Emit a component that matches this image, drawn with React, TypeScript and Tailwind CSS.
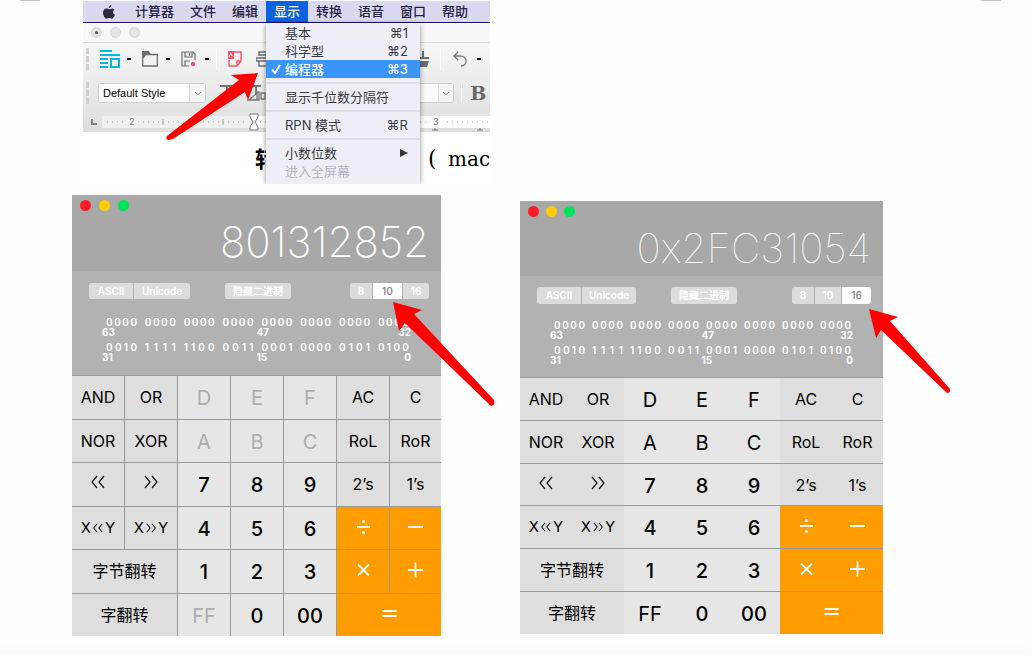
import type { ReactNode } from "react";

type CalcProps = {
  label: string;
  value: string;
  base: "8" | "10" | "16";
  hex: boolean;
  divided: boolean;
  roomy: boolean;
};

const HIGH_BITS = ["0000", "0000", "0000", "0000", "0000", "0000", "0000", "0000"];
const LOW_BITS = ["0010", "1111", "1100", "0011", "0001", "0000", "0101", "0100"];

type Key = { text: string; kind: "op" | "num" | "hex" | "orange"; wide?: boolean };

const KEYS: Key[] = [
  { text: "AND", kind: "op" }, { text: "OR", kind: "op" }, { text: "D", kind: "hex" }, { text: "E", kind: "hex" }, { text: "F", kind: "hex" }, { text: "AC", kind: "op" }, { text: "C", kind: "op" },
  { text: "NOR", kind: "op" }, { text: "XOR", kind: "op" }, { text: "A", kind: "hex" }, { text: "B", kind: "hex" }, { text: "C", kind: "hex" }, { text: "RoL", kind: "op" }, { text: "RoR", kind: "op" },
  { text: "<<", kind: "op" }, { text: ">>", kind: "op" }, { text: "7", kind: "num" }, { text: "8", kind: "num" }, { text: "9", kind: "num" }, { text: "2’s", kind: "op" }, { text: "1’s", kind: "op" },
  { text: "X<<Y", kind: "op" }, { text: "X>>Y", kind: "op" }, { text: "4", kind: "num" }, { text: "5", kind: "num" }, { text: "6", kind: "num" }, { text: "÷", kind: "orange" }, { text: "−", kind: "orange" },
  { text: "字节翻转", kind: "op", wide: true }, { text: "1", kind: "num" }, { text: "2", kind: "num" }, { text: "3", kind: "num" }, { text: "×", kind: "orange" }, { text: "+", kind: "orange" },
  { text: "字翻转", kind: "op", wide: true }, { text: "FF", kind: "hex" }, { text: "0", kind: "num" }, { text: "00", kind: "num" }, { text: "=", kind: "orange", wide: true },
];

function Chevrons({ right }: { right?: boolean }) {
  return (
    <svg viewBox="0 0 14 14" className="mb-1 h-3.5 w-3.5 shrink-0" fill="none" stroke="#111" strokeWidth="1.2" aria-hidden="true">
      <path d={right ? "M1 1l5 6-5 6M8 1l5 6-5 6" : "M6 1L1 7l5 6M13 1L8 7l5 6"} />
    </svg>
  );
}

function OperatorGlyph({ name }: { name: string }) {
  const shapes: Record<string, ReactNode> = {
    "÷": <><path d="M2 9h13" /><circle cx="8.5" cy="3.5" r="1.6" fill="#fff" stroke="none" /><circle cx="8.5" cy="14.5" r="1.6" fill="#fff" stroke="none" /></>,
    "−": <path d="M1 9h15" />,
    "×": <path d="M3 3.5l11 11M14 3.5l-11 11" />,
    "+": <path d="M1 9h15M8.5 1.5v15" />,
    "=": <path d="M1.500 6h14M1.500 11h14" />,
  };
  return (
    <svg viewBox="0 0 17 18" className="mb-0.5 h-[18px] w-[17px]" fill="none" stroke="#fff" strokeWidth="1.8" aria-hidden="true">
      {shapes[name]}
    </svg>
  );
}

function KeyFace({ text, kind }: Key) {
  if (kind === "orange") return <OperatorGlyph name={text} />;
  if (text === "<<") return <Chevrons />;
  if (text === ">>") return <Chevrons right />;
  if (text === "X<<Y" || text === "X>>Y") {
    return (
      <>
        <span>X</span>
        <svg viewBox="0 0 14 14" className="mx-px h-3 w-3" fill="none" stroke="#111" strokeWidth="1.2" aria-hidden="true">
          <path d={text === "X>>Y" ? "M2 2l4 5-4 5M8 2l4 5-4 5" : "M6 2L2 7l4 5M12 2L8 7l4 5"} />
        </svg>
        <span>Y</span>
      </>
    );
  }
  return <span>{text}</span>;
}

function BitRow({ groups }: { groups: string[] }) {
  return (
    <div className="flex justify-between pl-1 pr-0.5 leading-3">
      {groups.map((g, i) => (
        <div key={i} className="flex w-[31px] justify-between font-semibold">
          {g.split("").map((b, j) => <span key={j}>{b}</span>)}
        </div>
      ))}
    </div>
  );
}

function BitLabels({ left, middle, right }: { left: string; middle: string; right: string }) {
  return (
    <div className="grid grid-cols-2 font-bold leading-[9px]">
      <span>{left}</span>
      <span className="flex justify-between"><span>{middle}</span><span>{right}</span></span>
    </div>
  );
}

function Calculator({ label, value, base, hex, divided, roomy }: CalcProps) {
  return (
    <section aria-label={label} className="bg-[#b2b2b2] text-white">
      <header className={`bg-[#a8a8a8] ${roomy ? "h-[76px]" : "h-[75px]"}`}>
        <div className={`flex pl-2 pt-[5px] ${roomy ? "gap-2" : "gap-[7px]"}`}>
          <button aria-label="关闭" className="h-[11px] w-[11px] rounded-full bg-[#ff1c24]" />
          <button aria-label="最小化" className="h-[11px] w-[11px] rounded-full bg-[#ffcc00]" />
          <button aria-label="缩放" className="h-[11px] w-[11px] rounded-full bg-[#00e45c]" />
        </div>
        <output className={`block pr-3 pt-2 text-right leading-[46px] ${roomy ? "text-[42px] font-extralight" : "text-[41px] font-thin"}`}>{value}</output>
      </header>

      <div className={`text-[10px] ${roomy ? "h-[104px]" : "h-[101px]"}`}>
        <div className={`flex pl-[17px] pr-3 font-semibold ${roomy ? "pt-3 leading-4" : "pt-[11px] leading-[17px]"}`}>
          <div className="flex gap-px overflow-hidden rounded-[3px]">
            <button className="w-11 bg-[#dcdcdc]">ASCII</button>
            <button className={`bg-[#dcdcdc] ${roomy ? "w-14" : "w-[54px]"}`}>Unicode</button>
          </div>
          <button className="ml-[35px] w-[66px] rounded-[3px] bg-[#dcdcdc] font-bold">隐藏二进制</button>
          <div className="ml-auto flex gap-px overflow-hidden rounded-[3px]">
            {(["8", "10", "16"] as const).map((b) => (
              <button
                key={b}
                aria-pressed={b === base}
                className={`${b === "8" ? "w-[22px]" : b === base ? "w-[29px]" : "w-[26px]"} ${b === base ? "bg-white text-[#8c8c8c]" : "bg-[#dcdcdc] text-white"}`}
              >
                {b}
              </button>
            ))}
          </div>
        </div>
        <div className={`px-[30px] ${roomy ? "pt-[17px]" : "pt-[15px]"}`}>
          <BitRow groups={HIGH_BITS} />
          <BitLabels left="63" middle="47" right="32" />
          <div className="h-1" />
          <BitRow groups={LOW_BITS} />
          <BitLabels left="31" middle="15" right="0" />
        </div>
      </div>

      <div
        className={`grid auto-rows-fr grid-cols-[repeat(6,52fr)_51fr] border-t border-[#9a9a9a] bg-[#9a9a9a] ${
          divided ? "gap-px" : "gap-y-px"
        } ${roomy ? "min-h-[261px]" : "min-h-[257px]"}`}
      >
        {KEYS.map((k, i) => {
          const tone =
            k.kind === "orange" ? "bg-[#ff9c00]" : k.kind === "op" ? "bg-[#dedede] text-black" : k.kind === "hex" && !hex ? "bg-[#e6e6e6] text-[#adadad]" : "bg-[#e6e6e6] text-black";
          const size = k.kind === "op" ? (k.text.includes("Y") ? "text-[15px]" : "text-base") : k.kind === "hex" ? "text-xl" : "text-xl font-medium";
          return (
            <button
              key={i}
              aria-label={k.text}
              disabled={k.kind === "hex" && !hex}
              className={`flex items-center justify-center ${k.wide ? "col-span-2" : ""} ${tone} ${size} ${k.kind === "num" || k.kind === "hex" ? "pt-0.5" : ""}`}
            >
              <KeyFace {...k} />
            </button>
          );
        })}
      </div>
    </section>
  );
}

function Dash() {
  return <span className="h-0.5 w-1 shrink-0 bg-black" />;
}

function Grip() {
  return <span className="h-[22px] w-[3px] shrink-0 border-l-[3px] border-dashed border-[#cfcfcf]" />;
}

function MenuItem({ text, shortcut, active, muted, submenu }: { text: string; shortcut?: string; active?: boolean; muted?: boolean; submenu?: boolean }) {
  return (
    <button
      role="menuitem"
      className={`flex h-[18px] w-full items-center pr-3 text-left ${active ? "bg-[#3a94fb] font-medium text-white" : muted ? "text-[#b5b5bf]" : "text-[#3a3a42]"}`}
    >
      <span className="flex w-[19px] items-center justify-center">
        {active && (
          <svg viewBox="0 0 10 10" className="h-2.5 w-2.5" fill="none" stroke="#fff" strokeWidth="2" aria-hidden="true"><path d="M1 5.5l3 3.500L9 1" /></svg>
        )}
      </span>
      <span>{text}</span>
      <span className="ml-auto">{shortcut}</span>
      {submenu && (
        <svg viewBox="0 0 8 10" className="h-2.5 w-2" fill="#33333b" aria-hidden="true"><path d="M0 1l8 4-8 4z" /></svg>
      )}
    </button>
  );
}

function MenuRule() {
  return <div className="my-1 h-0.5 bg-[#dcdce6]" />;
}

const MENUS = ["计算器", "文件", "编辑", "显示", "转换", "语音", "窗口", "帮助"];

function DisplayMenu() {
  return (
    <div role="menu" className="absolute left-[183px] top-[22px] z-10 h-[161px] w-[154px] bg-[#eeeff6] pt-px text-[13px] leading-[18px] shadow-[0_1px_5px_rgba(0,0,0,0.45)]">
      <MenuItem text="基本" shortcut="⌘1" />
      <MenuItem text="科学型" shortcut="⌘2" />
      <MenuItem text="编程器" shortcut="⌘3" active />
      <MenuRule />
      <MenuItem text="显示千位数分隔符" />
      <MenuRule />
      <MenuItem text="RPN 模式" shortcut="⌘R" />
      <MenuRule />
      <MenuItem text="小数位数" submenu />
      <MenuItem text="进入全屏幕" muted />
    </div>
  );
}

function SelectChevron() {
  return (
    <span className="flex w-4 items-center justify-center border-l border-[#dcdcdc] bg-[#f4f4f4]">
      <svg viewBox="0 0 8 5" className="h-[5px] w-2" fill="none" stroke="#888" aria-hidden="true"><path d="M1 1l3 2.500L7 1" /></svg>
    </span>
  );
}

function EditorShot() {
  return (
    <section aria-label="显示菜单" className="relative ml-[83px] h-[183px] w-[39.5%] overflow-hidden bg-white">
      <nav className="flex h-[22px] items-center whitespace-nowrap border-b border-[#1d1065] bg-[#d9d8ef] pl-5 text-[13px] font-medium text-[#25203f]">
        <svg viewBox="0 0 12 14" className="mr-3 h-3.5 w-3 shrink-0" fill="#2d2940" aria-hidden="true">
          <path d="M8.300 0C8.400 1.600 7.200 3 5.800 3 5.700 1.600 7 .2 8.300 0zM11.500 4.700C9.400 6 9.700 8.600 12 9.600 11.300 11.600 10 13.700 8.700 13.700c-1 0-1.300-.6-2.500-.6s-1.600.6-2.500.6C2 13.700 0 10.400 0 7.700 0 5 1.700 3.500 3.400 3.500c1.100 0 2 .7 2.700.7s1.700-.8 3-.8c.8 0 1.800.4 2.400 1.300z" />
        </svg>
        {MENUS.map((m) => (
          <button key={m} className={`h-[21px] px-2 ${m === "显示" ? "bg-[#0a64e0] text-white" : ""}`}>{m}</button>
        ))}
      </nav>

      <div className="flex h-5 items-center gap-2 border-b border-[#d9d9d9] bg-[#f8f8f8] pl-2">
        <span className="flex h-[11px] w-[11px] items-center justify-center rounded-full border border-[#d2d2d2] bg-[#e4e4e4]"><span className="h-[3px] w-[3px] rounded-full bg-[#555]" /></span>
        <span className="h-[11px] w-[11px] rounded-full border border-[#d6d6d6] bg-[#e4e4e4]" />
        <span className="h-[11px] w-[11px] rounded-full border border-[#d6d6d6] bg-[#e4e4e4]" />
      </div>

      <div className="bg-linear-to-b from-[#f6f6f6] to-[#dedede]">
        <div className="flex h-8 items-center pl-[3px]">
          <Grip />
          <svg viewBox="0 0 20 18" className="ml-[11px] mr-[7px] h-[18px] w-5 shrink-0" fill="none" stroke="#09b5e5" strokeWidth="2" aria-hidden="true">
            <path d="M0 1h12M0 5h20M0 9h8M0 13h8M0 17h8M11 9h8v8h-8z" />
          </svg>
          <Dash />
          <svg viewBox="0 0 16 16" className="ml-[11px] mr-2 h-4 w-4 shrink-0" fill="none" stroke="#6e6e6e" strokeWidth="1.3" aria-hidden="true">
            <path d="M.7 15V3.500h14.600V15z" /><path d="M0 0h7l2 4H4L2 7H0z" fill="#6e6e6e" stroke="none" />
          </svg>
          <Dash />
          <svg viewBox="0 0 16 16" className="ml-[11px] mr-2 h-4 w-4 shrink-0" fill="none" stroke="#6e6e6e" strokeWidth="1.2" aria-hidden="true">
            <path d="M8 15H1V1h11l2 2v6M4 1v5h7V1M8.500 2v3M4 15v-5h5" /><circle cx="12" cy="13" r="2.200" fill="#ff4b62" stroke="none" />
          </svg>
          <Dash />
          <span className="ml-[7px] h-[22px] w-px bg-white" />
          <svg viewBox="0 0 14 16" className="ml-[11px] h-4 w-3.5 shrink-0" fill="none" stroke="#fb5468" strokeWidth="1.4" aria-hidden="true">
            <path d="M6 1h7v9l-4 5H1V9M9 15v-5h4" /><path d="M0 0h6v8H0z" fill="#fb5468" stroke="none" /><path d="M1 6l2-4 1 3" stroke="#fff" strokeWidth="1" />
          </svg>
          <svg viewBox="0 0 16 16" className="ml-3.5 h-4 w-4 shrink-0" fill="none" stroke="#6e6e6e" strokeWidth="1.4" aria-hidden="true">
            <path d="M3 5V1h12v4M3 4h12M0 7h16v3H0zM3 10v5h12" />
          </svg>
          <span className="grow" />
          <svg viewBox="0 0 18 16" className="h-4 w-[18px] shrink-0" fill="#6e6e6e" aria-hidden="true">
            <path d="M11 0h2v6h5v2H4V6h7zM4 10h14l-2 6H4z" />
          </svg>
          <span className="ml-[11px] h-[22px] w-px bg-white" />
          <svg viewBox="0 0 14 16" className="ml-3 h-4 w-3.5 shrink-0" fill="none" stroke="#777" strokeWidth="1.3" aria-hidden="true">
            <path d="M5 1L1 5l4 4M1 5h6c8 0 8 10 1 10" />
          </svg>
          <span className="ml-2.5 mr-[9px] h-0.5 w-1 shrink-0 bg-black" />
        </div>

        <div className="flex h-9 items-center pl-[3px]">
          <Grip />
          <label className="ml-[9px] flex h-5 w-[108px] shrink-0 overflow-hidden rounded-[3px] border border-[#cdcdcd] bg-white">
            <input aria-label="段落样式" defaultValue="Default Style" className="w-[90px] min-w-0 bg-white pl-1 font-['Liberation_Sans'] text-[11px] text-black outline-none" />
            <SelectChevron />
          </label>
          <svg viewBox="0 0 48 20" className="ml-[13px] h-5 w-12 shrink-0" fill="none" stroke="#777" strokeWidth="2" aria-hidden="true">
            <path d="M1 3h13M8 3v12M31 3h11M37 3v8" /><path d="M30 17l7-6M28 17h10M38 9h2v8h-2zM42 10h4v6h-4z" strokeWidth="1.3" />
          </svg>
          <span className="grow" />
          <label className="flex h-5 w-[60px] shrink-0 overflow-hidden rounded-[3px] border border-[#cdcdcd] bg-[#fafafa]">
            <input aria-label="字号" className="w-11 min-w-0 bg-[#fafafa] outline-none" />
            <SelectChevron />
          </label>
          <span className="ml-[7px] h-[18px] w-px bg-white" />
          <button className="ml-2 mr-1 font-['DejaVu_Serif'] text-[19px] font-bold leading-5 text-[#686868]">B</button>
        </div>

        <div className="flex h-[21px] items-center pl-2">
          <span className="h-1.5 w-1.5 shrink-0 border-b-2 border-l-2 border-[#808080]" />
          <svg viewBox="0 0 390 18" className="ml-[5px] h-[18px] w-[390px] shrink-0" fill="none" stroke="#a3a3a3" aria-hidden="true">
            <path d="M0 3h152v12H0z" fill="#f0f0f0" stroke="none" /><path d="M152 3h238v12H152z" fill="#fff" stroke="none" />
            <path d="M5 9h20M36 9h110M158 9h170M345 9h45" strokeDasharray="1 4" />
            <path d="M61 6v6M121 6v6" />
            <path d="M148 1h8v3l-3 5 3 5v3h-8v-3l3-5-3-5z" fill="#fff" stroke="#777" />
            <path d="M330 17h6M333 15v2M375 17h6M378 15v2" stroke="#777" />
            <text x="27" y="12" fill="#777" stroke="none" fontSize="9">2</text>
            <text x="331" y="12" fill="#777" stroke="none" fontSize="9">3</text>
          </svg>
        </div>
      </div>

      <p className="flex whitespace-nowrap pl-[172px] pt-[11px] text-[22px] leading-8 text-black">
        <span className="w-[173px] font-bold">转</span>
        <span className="w-5 font-['DejaVu_Serif'] text-[22px]">(</span>
        <span className="font-['DejaVu_Serif'] text-xl leading-8">mac</span>
      </p>

      <DisplayMenu />
      <svg viewBox="0 0 94 70" className="absolute left-[82px] top-[71px] z-20 h-[70px] w-[94px]" fill="#ff0000" aria-hidden="true">
        <path d="M93 1L66 3l8 5L2 64q-2 4 2 4l4-1L80 20l3 8z" />
      </svg>
    </section>
  );
}

export default function App() {
  return (
    <main className="flex min-h-screen flex-col bg-[#fefefe] font-['Inter','Noto_Sans_CJK_SC',sans-serif]">
      <div className="flex h-px justify-between pl-5 pr-[30px]">
        <span className="w-5 bg-[#c6c6c6]" />
        <span className="w-5 bg-[#c6c6c6]" />
      </div>
      <EditorShot />
      <div className="grid grid-cols-[72fr_369fr_79fr_363fr_148fr] items-start pt-[11px]">
        <div className="relative col-start-2">
          <Calculator label="十进制计算器" value="801312852" base="10" hex={false} divided roomy />
          <svg viewBox="0 0 104 106" className="pointer-events-none absolute left-[320px] top-[106px] z-20 h-[106px] w-[104px]" fill="#ff0000" aria-hidden="true">
            <path d="M1 1l29 8-8 4 80 86q2 5-3 6L13 22l-6 8z" />
          </svg>
        </div>
        <div className="relative col-start-4 mt-1.5">
          <Calculator label="十六进制计算器" value="0x2FC31054" base="16" hex divided={false} roomy={false} />
          <svg viewBox="0 0 84 86" className="pointer-events-none absolute left-[348px] top-[107px] z-20 h-[86px] w-[84px]" fill="#ff0000" aria-hidden="true">
            <path d="M1 1l29 8-8 4 60 68q1 4-3 4L13 22l-5 8z" />
          </svg>
        </div>
      </div>
      <div className="grow bg-linear-to-b from-[#fefefe] to-[#fafafa]" />
    </main>
  );
}
